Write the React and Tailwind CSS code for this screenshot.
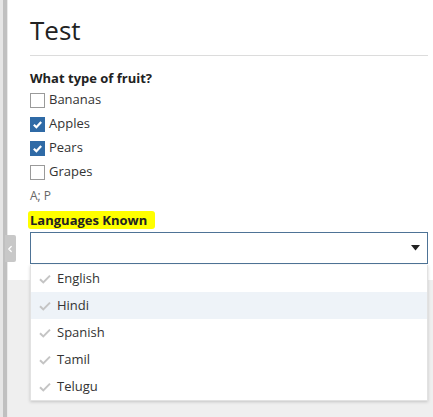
import { ChevronLeft } from 'lucide-react';

const fruits = [
  { label: 'Bananas', checked: false },
  { label: 'Apples', checked: true },
  { label: 'Pears', checked: true },
  { label: 'Grapes', checked: false },
];

const languages = ['English', 'Hindi', 'Spanish', 'Tamil', 'Telugu'];

function Box({ checked }) {
  if (checked) {
    return (
      <span className="w-[15px] h-[15px] bg-[#2f6aa6] flex items-center justify-center shrink-0">
        <svg width="11" height="11" viewBox="0 0 12 12">
          <path d="M2 6.2 L4.8 9 L10 3.2" fill="none" stroke="#fff" strokeWidth="2.4" />
        </svg>
      </span>
    );
  }
  return <span className="w-[15px] h-[15px] border border-[#9a9a9a] bg-white shrink-0" />;
}

function Tick() {
  return (
    <svg width="12" height="10" viewBox="0 0 12 10" className="shrink-0">
      <path d="M1 5.2 L4.3 8.4 L11 1.6" fill="none" stroke="#c4c4c4" strokeWidth="2" />
    </svg>
  );
}

export default function App() {
  return (
    <div
      className="relative w-[433px] h-[417px] bg-[#efefef] flex overflow-hidden text-[#222]"
      style={{ fontFamily: "'Open Sans', 'Noto Sans', sans-serif" }}
    >
      {/* left splitter */}
      <div className="w-[3px] bg-[#e6e6e6]" />
      <div className="w-[4px] bg-[#c0c0c0]" />
      <div className="w-[1px] bg-[#e9e9e9]" />

      <div className="flex-1 flex flex-col">
        <div className="h-[280px] bg-white pl-[22px] pr-[5px]">
          <h1 className="text-[26px] leading-none pt-[17px] pb-[12px] border-b border-[#dcdcdc] text-[#222]">Test</h1>

          <div className="pt-[13px]">
            <div className="text-[13px] font-bold leading-[18px]">What type of fruit?</div>
            <div className="flex flex-col mt-[1px]">
              {fruits.map((f) => (
                <label key={f.label} className="flex items-center gap-[4px] h-[24px] text-[13px] text-[#333]">
                  <Box checked={f.checked} />
                  <span>{f.label}</span>
                </label>
              ))}
            </div>
            <div className="text-[12px] text-[#666] h-[24px] flex items-center">A; P</div>
          </div>

          <div className="mt-[2px] h-[20px] flex items-center">
            <span className="text-[13px] font-bold bg-[#ffff00] px-[2px] -ml-[2px] rounded-[3px] leading-[18px] pr-[8px]">
              Languages Known
            </span>
          </div>

          <div className="mt-[2px] h-[32px] border border-[#4e7396] bg-white flex items-center justify-end pr-[7px]">
            <svg width="9" height="6" viewBox="0 0 9 6">
              <path d="M0 0 H9 L4.5 5.5 Z" fill="#222" />
            </svg>
          </div>
        </div>
      </div>

      {/* collapse tab */}
      <div className="absolute left-[5px] top-[235px] w-[11px] h-[27px] bg-[#c8c8c8] rounded-r-[2px] flex items-center justify-center">
        <ChevronLeft size={10} strokeWidth={3} className="text-white -ml-[1px]" />
      </div>

      {/* dropdown list */}
      <ul className="absolute left-[30px] top-[265px] w-[398px] bg-white shadow-[0_1px_3px_rgba(0,0,0,0.18)] border border-t-0 border-[#e2e2e2]">
        {languages.map((l) => (
          <li
            key={l}
            className={`h-[27px] flex items-center gap-[6px] pl-[8px] text-[13px] text-[#333] ${l === 'Hindi' ? 'bg-[#eef3f8]' : ''}`}
          >
            <Tick />
            <span>{l}</span>
          </li>
        ))}
      </ul>
    </div>
  );
}
